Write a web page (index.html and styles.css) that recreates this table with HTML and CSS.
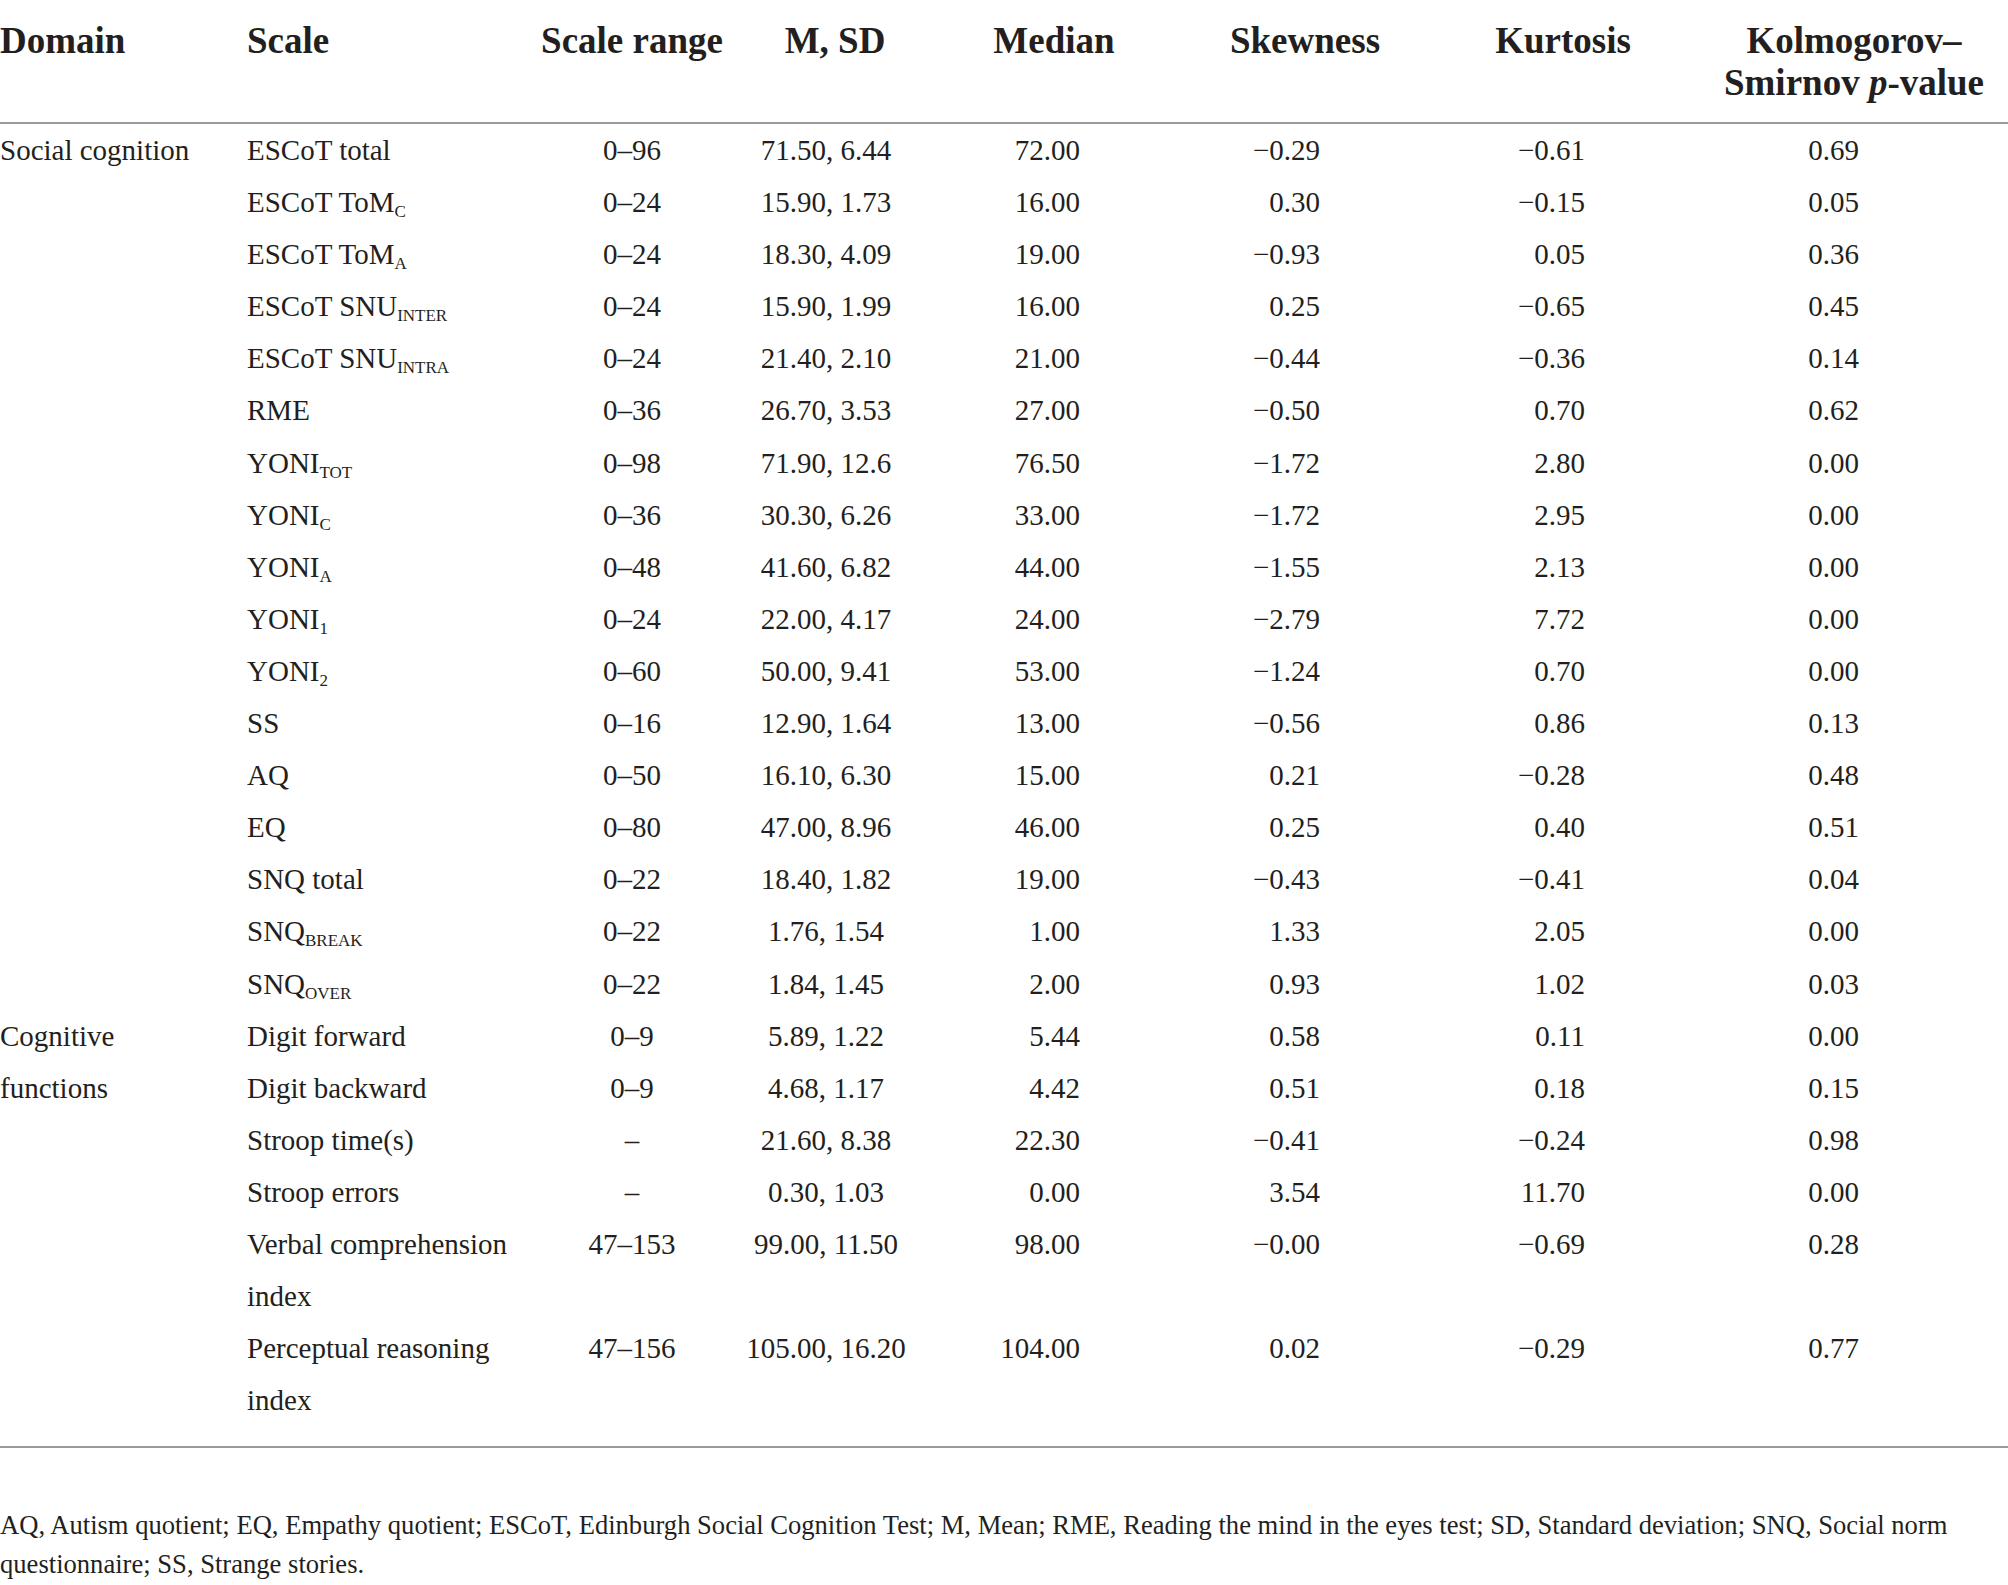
FILE: index.html
```html
<!DOCTYPE html>
<html lang="en">

<head>
  <meta charset="UTF-8">
  <meta name="viewport" content="width=device-width, initial-scale=1.0">
  <title>Descriptive statistics</title>
  <link rel="stylesheet" href="styles.css">
</head>

<body>
  <div class="table-wrap">
    <table class="stats">
      <colgroup>
        <col class="c-domain">
        <col class="c-scale">
        <col class="c-range">
        <col class="c-msd">
        <col class="c-median">
        <col class="c-skew">
        <col class="c-kurt">
        <col class="c-ks">
      </colgroup>
      <thead>
        <tr>
          <th class="left">Domain</th>
          <th class="left">Scale</th>
          <th>Scale range</th>
          <th>M, SD</th>
          <th>Median</th>
          <th>Skewness</th>
          <th>Kurtosis</th>
          <th class="ks">Kolmogorov–<br>Smirnov <i>p</i>-value</th>
        </tr>
      </thead>
      <tbody>
        <tr>
          <td rowspan="17">Social cognition</td>
          <td>ESCoT total</td>
          <td class="range">0–96</td>
          <td class="msd">71.50, 6.44</td>
          <td class="num med">72.00</td>
          <td class="num skew">−0.29</td>
          <td class="num kurt">−0.61</td>
          <td class="num ks">0.69</td>
        </tr>
        <tr>
          <td>ESCoT ToM<sub>C</sub></td>
          <td class="range">0–24</td>
          <td class="msd">15.90, 1.73</td>
          <td class="num med">16.00</td>
          <td class="num skew">0.30</td>
          <td class="num kurt">−0.15</td>
          <td class="num ks">0.05</td>
        </tr>
        <tr>
          <td>ESCoT ToM<sub>A</sub></td>
          <td class="range">0–24</td>
          <td class="msd">18.30, 4.09</td>
          <td class="num med">19.00</td>
          <td class="num skew">−0.93</td>
          <td class="num kurt">0.05</td>
          <td class="num ks">0.36</td>
        </tr>
        <tr>
          <td>ESCoT SNU<sub>INTER</sub></td>
          <td class="range">0–24</td>
          <td class="msd">15.90, 1.99</td>
          <td class="num med">16.00</td>
          <td class="num skew">0.25</td>
          <td class="num kurt">−0.65</td>
          <td class="num ks">0.45</td>
        </tr>
        <tr>
          <td>ESCoT SNU<sub>INTRA</sub></td>
          <td class="range">0–24</td>
          <td class="msd">21.40, 2.10</td>
          <td class="num med">21.00</td>
          <td class="num skew">−0.44</td>
          <td class="num kurt">−0.36</td>
          <td class="num ks">0.14</td>
        </tr>
        <tr>
          <td>RME</td>
          <td class="range">0–36</td>
          <td class="msd">26.70, 3.53</td>
          <td class="num med">27.00</td>
          <td class="num skew">−0.50</td>
          <td class="num kurt">0.70</td>
          <td class="num ks">0.62</td>
        </tr>
        <tr>
          <td>YONI<sub>TOT</sub></td>
          <td class="range">0–98</td>
          <td class="msd">71.90, 12.6</td>
          <td class="num med">76.50</td>
          <td class="num skew">−1.72</td>
          <td class="num kurt">2.80</td>
          <td class="num ks">0.00</td>
        </tr>
        <tr>
          <td>YONI<sub>C</sub></td>
          <td class="range">0–36</td>
          <td class="msd">30.30, 6.26</td>
          <td class="num med">33.00</td>
          <td class="num skew">−1.72</td>
          <td class="num kurt">2.95</td>
          <td class="num ks">0.00</td>
        </tr>
        <tr>
          <td>YONI<sub>A</sub></td>
          <td class="range">0–48</td>
          <td class="msd">41.60, 6.82</td>
          <td class="num med">44.00</td>
          <td class="num skew">−1.55</td>
          <td class="num kurt">2.13</td>
          <td class="num ks">0.00</td>
        </tr>
        <tr>
          <td>YONI<sub>1</sub></td>
          <td class="range">0–24</td>
          <td class="msd">22.00, 4.17</td>
          <td class="num med">24.00</td>
          <td class="num skew">−2.79</td>
          <td class="num kurt">7.72</td>
          <td class="num ks">0.00</td>
        </tr>
        <tr>
          <td>YONI<sub>2</sub></td>
          <td class="range">0–60</td>
          <td class="msd">50.00, 9.41</td>
          <td class="num med">53.00</td>
          <td class="num skew">−1.24</td>
          <td class="num kurt">0.70</td>
          <td class="num ks">0.00</td>
        </tr>
        <tr>
          <td>SS</td>
          <td class="range">0–16</td>
          <td class="msd">12.90, 1.64</td>
          <td class="num med">13.00</td>
          <td class="num skew">−0.56</td>
          <td class="num kurt">0.86</td>
          <td class="num ks">0.13</td>
        </tr>
        <tr>
          <td>AQ</td>
          <td class="range">0–50</td>
          <td class="msd">16.10, 6.30</td>
          <td class="num med">15.00</td>
          <td class="num skew">0.21</td>
          <td class="num kurt">−0.28</td>
          <td class="num ks">0.48</td>
        </tr>
        <tr>
          <td>EQ</td>
          <td class="range">0–80</td>
          <td class="msd">47.00, 8.96</td>
          <td class="num med">46.00</td>
          <td class="num skew">0.25</td>
          <td class="num kurt">0.40</td>
          <td class="num ks">0.51</td>
        </tr>
        <tr>
          <td>SNQ total</td>
          <td class="range">0–22</td>
          <td class="msd">18.40, 1.82</td>
          <td class="num med">19.00</td>
          <td class="num skew">−0.43</td>
          <td class="num kurt">−0.41</td>
          <td class="num ks">0.04</td>
        </tr>
        <tr>
          <td>SNQ<sub>BREAK</sub></td>
          <td class="range">0–22</td>
          <td class="msd">1.76, 1.54</td>
          <td class="num med">1.00</td>
          <td class="num skew">1.33</td>
          <td class="num kurt">2.05</td>
          <td class="num ks">0.00</td>
        </tr>
        <tr>
          <td>SNQ<sub>OVER</sub></td>
          <td class="range">0–22</td>
          <td class="msd">1.84, 1.45</td>
          <td class="num med">2.00</td>
          <td class="num skew">0.93</td>
          <td class="num kurt">1.02</td>
          <td class="num ks">0.03</td>
        </tr>
        <tr>
          <td rowspan="6">Cognitive<br>functions</td>
          <td>Digit forward</td>
          <td class="range">0–9</td>
          <td class="msd">5.89, 1.22</td>
          <td class="num med">5.44</td>
          <td class="num skew">0.58</td>
          <td class="num kurt">0.11</td>
          <td class="num ks">0.00</td>
        </tr>
        <tr>
          <td>Digit backward</td>
          <td class="range">0–9</td>
          <td class="msd">4.68, 1.17</td>
          <td class="num med">4.42</td>
          <td class="num skew">0.51</td>
          <td class="num kurt">0.18</td>
          <td class="num ks">0.15</td>
        </tr>
        <tr>
          <td>Stroop time(s)</td>
          <td class="range">–</td>
          <td class="msd">21.60, 8.38</td>
          <td class="num med">22.30</td>
          <td class="num skew">−0.41</td>
          <td class="num kurt">−0.24</td>
          <td class="num ks">0.98</td>
        </tr>
        <tr>
          <td>Stroop errors</td>
          <td class="range">–</td>
          <td class="msd">0.30, 1.03</td>
          <td class="num med">0.00</td>
          <td class="num skew">3.54</td>
          <td class="num kurt">11.70</td>
          <td class="num ks">0.00</td>
        </tr>
        <tr>
          <td>Verbal comprehension<br>index</td>
          <td class="range">47–153</td>
          <td class="msd">99.00, 11.50</td>
          <td class="num med">98.00</td>
          <td class="num skew">−0.00</td>
          <td class="num kurt">−0.69</td>
          <td class="num ks">0.28</td>
        </tr>
        <tr>
          <td>Perceptual reasoning<br>index</td>
          <td class="range">47–156</td>
          <td class="msd">105.00, 16.20</td>
          <td class="num med">104.00</td>
          <td class="num skew">0.02</td>
          <td class="num kurt">−0.29</td>
          <td class="num ks">0.77</td>
        </tr>
      </tbody>
    </table>
  </div>

  <p class="note">
    AQ, Autism quotient; EQ, Empathy quotient; ESCoT, Edinburgh Social Cognition Test; M, Mean; RME, Reading the mind in the eyes test; SD, Standard deviation; SNQ, Social norm questionnaire; SS, Strange stories.
  </p>
</body>

</html>
```

FILE: styles.css
```css
:root {
  --ink: #231f20;
  --rule: #9a9a9a;
}

* {
  margin: 0;
  padding: 0;
  box-sizing: border-box;
}

body {
  font-family: 'Liberation Serif', 'Times New Roman', serif;
  color: var(--ink);
  background: #fff;
  width: 2008px;
}

/* table */
.table-wrap {
  padding-bottom: 20px;
  border-bottom: 2px solid var(--rule);
}

.stats {
  width: 2008px;
  table-layout: fixed;
  border-collapse: separate;
  border-spacing: 0;
}

.c-domain { width: 247px; }
.c-scale { width: 283px; }
.c-range { width: 204px; }
.c-msd { width: 202px; }
.c-median { width: 236px; }
.c-skew { width: 266px; }
.c-kurt { width: 250px; }
.c-ks { width: 320px; }

.stats th {
  font-size: 37px;
  line-height: 42px;
  font-weight: bold;
  text-align: center;
  vertical-align: top;
  white-space: nowrap;
  padding: 20px 0 18px;
  border-bottom: 2px solid var(--rule);
}

.stats th.left {
  text-align: left;
}

.stats th.ks {
  padding-left: 12px;
}

.stats td {
  font-size: 29px;
  line-height: 52.1px;
  vertical-align: top;
  text-align: left;
  white-space: nowrap;
}

.stats sub {
  font-size: 17px;
  line-height: 0;
  vertical-align: -5px;
}

.stats td.range {
  text-align: center;
}

.stats td.msd {
  text-align: center;
  padding-right: 18px;
}

.stats td.num {
  text-align: right;
}

.stats td.med { padding-right: 92px; }
.stats td.skew { padding-right: 118px; }
.stats td.kurt { padding-right: 103px; }
.stats td.ks { padding-right: 149px; }

/* footnote */
.note {
  font-size: 26.6px;
  line-height: 39px;
  margin-top: 58px;
}
```
